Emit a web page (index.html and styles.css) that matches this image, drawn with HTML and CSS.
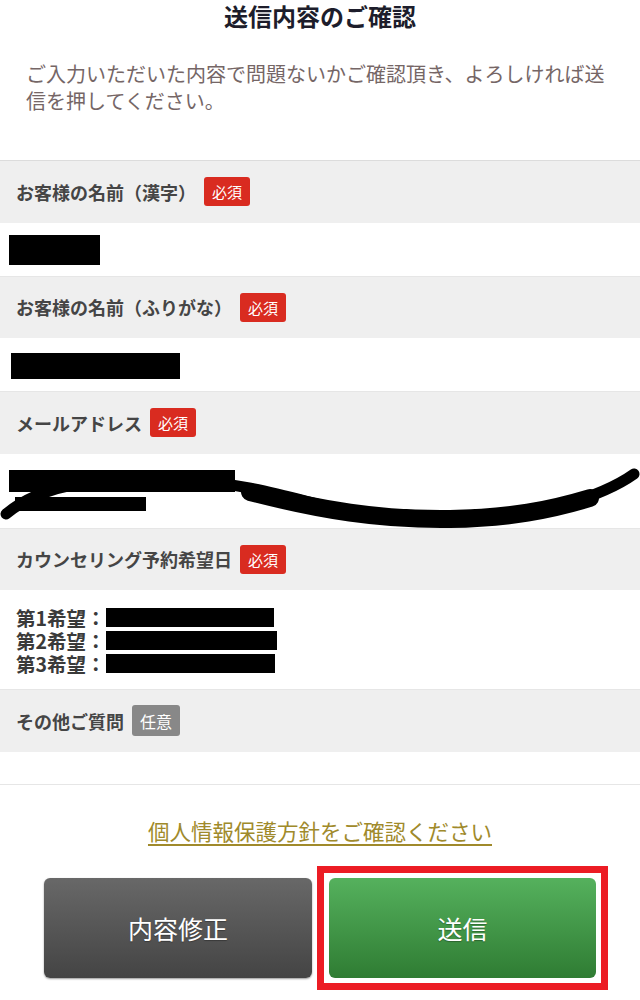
FILE: index.html
```html
<!DOCTYPE html>
<html lang="ja">
<head>
    <meta charset="UTF-8">
    <meta name="viewport" content="width=device-width, initial-scale=1.0">
    <title>送信内容のご確認</title>
    <link rel="stylesheet" href="styles.css">
</head>
<body>
    <h1 class="page-title">送信内容のご確認</h1>
    <p class="lead">ご入力いただいた内容で問題ないかご確認頂き、よろしければ送信を押してください。</p>

    <div class="confirm-list">
        <div class="item-label">お客様の名前（漢字）<span class="badge">必須</span></div>
        <div class="item-value value-name">
            <span class="mask" style="width: 91px; height: 30px;"></span>
        </div>

        <div class="item-label">お客様の名前（ふりがな）<span class="badge">必須</span></div>
        <div class="item-value value-kana">
            <span class="mask" style="width: 169px; height: 26px;"></span>
        </div>

        <div class="item-label">メールアドレス<span class="badge">必須</span></div>
        <div class="item-value value-mail">
            <span class="mask" style="width: 226px; height: 22px;"></span>
            <span class="mask mask-sub" style="width: 131px; height: 14px;"></span>
            <!-- 手書きの塗りつぶし -->
            <svg class="scribble" width="640" height="75" viewBox="0 0 640 75">
                <path d="M6,60 C40,32 90,22 180,26 C260,30 300,48 360,60 C420,70 500,68 560,52 C595,42 620,30 634,20" fill="none" stroke="#000" stroke-width="11" stroke-linecap="round"/>
                <path d="M250,38 C320,56 380,66 450,65 C510,64 550,56 590,44" fill="none" stroke="#000" stroke-width="18" stroke-linecap="round"/>
            </svg>
        </div>

        <div class="item-label">カウンセリング予約希望日<span class="badge">必須</span></div>
        <div class="item-value value-date">
            <div class="date-line">第1希望：<span class="mask" style="width: 168px; height: 19px;"></span></div>
            <div class="date-line">第2希望：<span class="mask" style="width: 171px; height: 19px;"></span></div>
            <div class="date-line">第3希望：<span class="mask" style="width: 169px; height: 19px;"></span></div>
        </div>

        <div class="item-label">その他ご質問<span class="badge badge-any">任意</span></div>
        <div class="item-value value-empty"></div>
    </div>

    <p class="policy"><a href="#">個人情報保護方針をご確認ください</a></p>

    <div class="buttons">
        <button class="btn btn-back">内容修正</button>
        <div class="highlight-box">
            <button class="btn btn-send">送信</button>
        </div>
    </div>
</body>
</html>
```

FILE: styles.css
```css
body {
    margin: 0;
    font-family: "Noto Sans CJK JP", "Noto Sans", sans-serif;
    background-color: #fff;
    color: #444;
}
.page-title {
    margin: 0;
    height: 32px;
    font-size: 24px;
    line-height: 32px;
    text-align: center;
    color: #1d1d2b;
    font-weight: bold;
}
.lead {
    margin: 28px 0 0;
    padding: 0 26px;
    height: 100px;
    font-size: 20px;
    line-height: 27px;
    color: #756666;
}
.confirm-list {
    border-top: 1px solid #dcdcdc;
}
.item-label {
    display: flex;
    align-items: center;
    gap: 8px;
    height: 61.5px;
    padding: 0 16px;
    background-color: #efefef;
    font-size: 18px;
    font-weight: bold;
    color: #454545;
}
.badge {
    display: inline-flex;
    align-items: center;
    height: 29px;
    padding: 0 8px;
    border-radius: 3px;
    background-color: #d92b20;
    color: #fff;
    font-size: 15px;
    font-weight: normal;
}
.badge-any {
    height: 31px;
    font-size: 16px;
    background-color: #888;
}
.item-value {
    position: relative;
    background-color: #fff;
    border-bottom: 1px solid #e6e6e6;
    box-sizing: border-box;
}
.mask {
    display: inline-block;
    background-color: #000;
    vertical-align: middle;
}
.value-name {
    height: 54px;
    padding: 12px 9px;
}
.value-kana {
    height: 54px;
    padding: 13px 11px;
}
.value-mail {
    height: 75px;
    padding: 16px 9px 0;
}
.value-mail .mask {
    display: block;
}
.value-mail .mask-sub {
    margin: 5px 0 0 6px;
}
.scribble {
    position: absolute;
    left: 0;
    top: 0;
}
.value-date {
    height: 100px;
    padding: 16px 16px;
    font-size: 19.5px;
    font-weight: bold;
    line-height: 23px;
    color: #3a3a3a;
}
.date-line {
    display: flex;
    align-items: center;
}
.value-empty {
    height: 33px;
}
.policy {
    margin: 31px 0 0;
    text-align: center;
    font-size: 21.5px;
    line-height: 30px;
}
.policy a {
    color: #a08a2b;
    text-decoration: underline;
    text-underline-offset: 4px;
}
.buttons {
    display: flex;
    align-items: center;
    gap: 5px;
    margin-top: 20px;
    padding-left: 44px;
}
.btn {
    width: 268px;
    height: 100px;
    border: none;
    border-radius: 6px;
    color: #fff;
    font-family: inherit;
    font-size: 25px;
    text-shadow: 0 1px 1px rgba(0,0,0,0.3);
}
.btn-back {
    background: linear-gradient(#686868, #444);
    box-shadow: 0 1px 2px rgba(0,0,0,0.4);
}
.highlight-box {
    border: 7px solid #ec1c24;
    padding: 5px;
}
.btn-send {
    display: block;
    width: 267px;
    background: linear-gradient(#55b15d, #2f7c33);
}
```
